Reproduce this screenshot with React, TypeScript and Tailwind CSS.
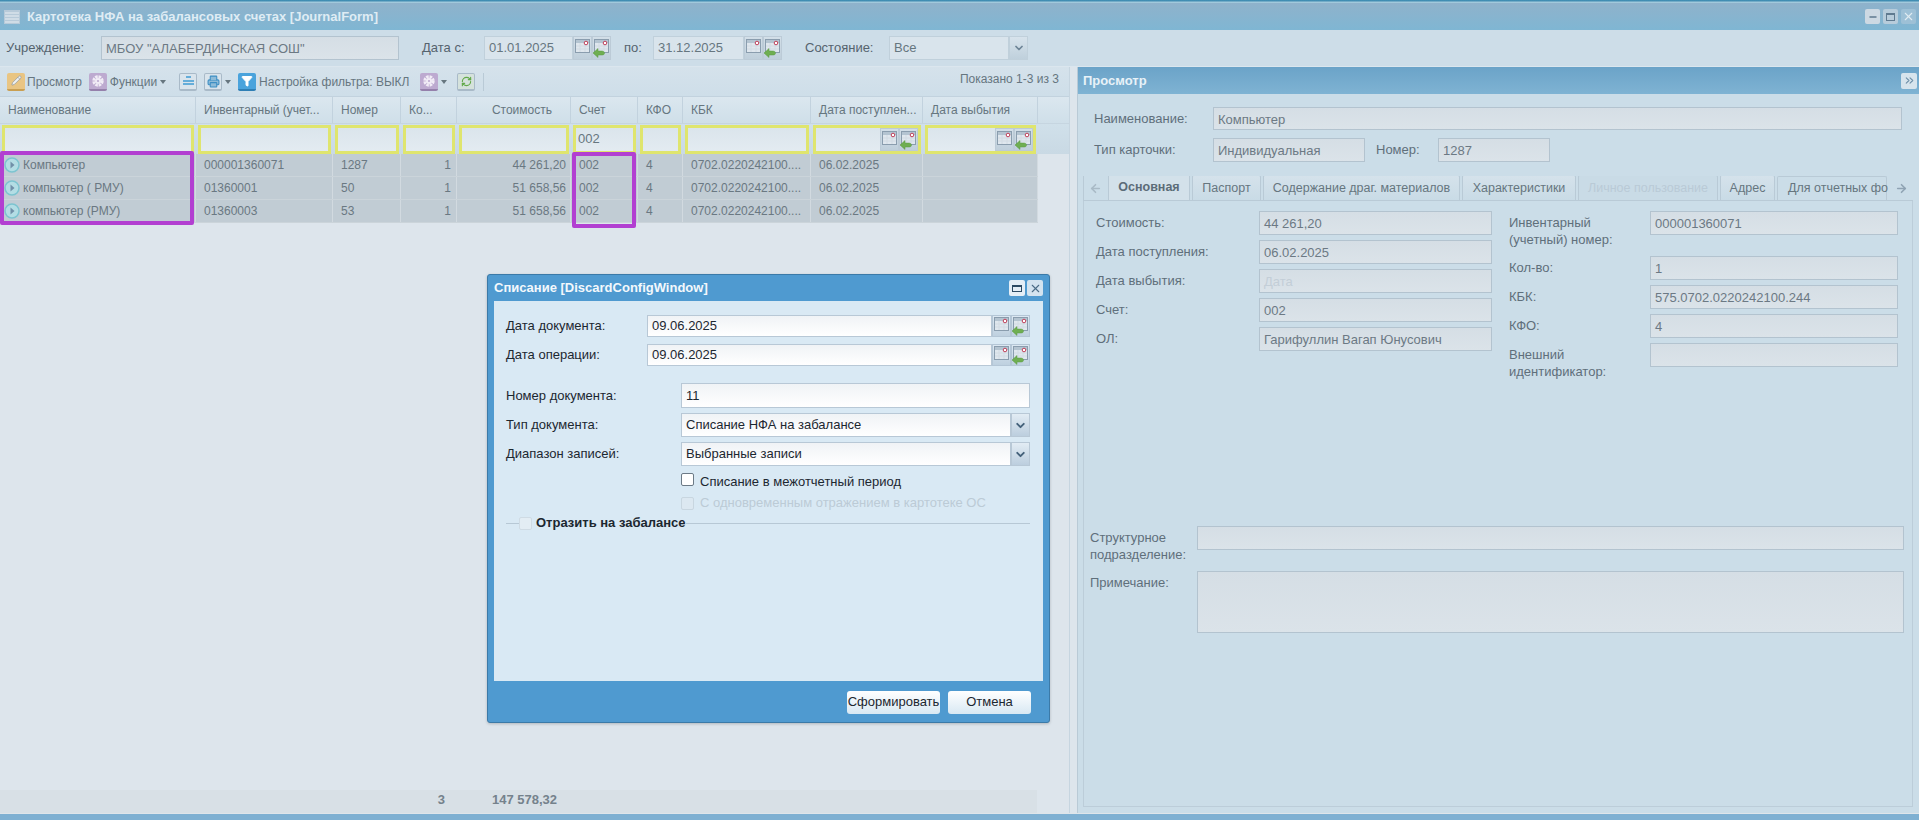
import { ArrowLeft, ArrowRight, ChevronDown, ChevronsRight, Funnel, Minus, Pencil, Printer, RefreshCw, X } from "lucide-react";
import React from "react";

type Col = { title: string; width: string; right?: boolean; date?: boolean; value?: string };

const columns: Array<Col> = [
    { title: "Наименование", width: "w-[196px]" },
    { title: "Инвентарный (учет...", width: "w-[137px]" },
    { title: "Номер", width: "w-[68px]" },
    { title: "Ко...", width: "w-[56px]" },
    { title: "Стоимость", width: "w-[114px]", right: true },
    { title: "Счет", width: "w-[67px]", value: "002" },
    { title: "КФО", width: "w-[45px]" },
    { title: "КБК", width: "w-[128px]" },
    { title: "Дата поступлен...", width: "w-[112px]", date: true },
    { title: "Дата выбытия", width: "w-[115px]", date: true },
];

const rows = [
    ["Компьютер", "000001360071", "1287", "1", "44 261,20", "002", "4", "0702.0220242100....", "06.02.2025", ""],
    ["компьютер ( РМУ)", "01360001", "50", "1", "51 658,56", "002", "4", "0702.0220242100....", "06.02.2025", ""],
    ["компьютер (РМУ)", "01360003", "53", "1", "51 658,56", "002", "4", "0702.0220242100....", "06.02.2025", ""],
];

function CalendarIcon({ arrow }: { arrow?: boolean }) {
    return (
        <svg width="17" height="20" viewBox="0 0 17 20">
            <rect x="1.5" y="1.5" width="14" height="13" fill="#dfe7ee" stroke="#8a9dae" />
            <rect x="2" y="2" width="13" height="3" fill="#b4c4d1" />
            <path d="M2 8h13M2 11h13M6 5v9M11 5v9" stroke="#d2dbe3" strokeWidth="1" />
            <circle cx="12" cy="5" r="1.8" fill="#fff" stroke="#c0405a" strokeWidth="1" />
            {arrow && <path d="M0 15l5-4.500V13h4c1.500 0 2.500 1 2.500 2.200S10.500 17 9 17H5v2.500z" fill="#6fae52" stroke="#5a9a42" strokeWidth="0.5" />}
        </svg>
    );
}

function DateButtons({ dialog }: { dialog?: boolean }) {
    const cls = dialog
        ? "flex items-center justify-center w-[19px] border border-[#b4c6d6] bg-gradient-to-b from-[#dce8f2] to-[#bed0df]"
        : "flex items-center justify-center w-[19px] border border-[#bccbd7] bg-gradient-to-b from-[#d3dfe8] to-[#bfcfdb]";
    return (
        <>
            <div className={cls}><CalendarIcon /></div>
            <div className={cls}><CalendarIcon arrow /></div>
        </>
    );
}

function Field({ width, height = "h-[24px]", text, dim }: { width: string; height?: string; text?: string; dim?: boolean }) {
    return (
        <div className={`${width} ${height} shrink-0 border border-[#b3c3cf] bg-gradient-to-b from-[#d5dee5] to-[#dbe3e9] pl-[4px] pt-[3px] text-[13px] leading-[17px] ${dim ? "text-[#c3ced7]" : "text-[#6c7984]"}`}>
            {text}
        </div>
    );
}

function DialogInput({ label, labelWidth, value, className, height, children }: { label: string; labelWidth: string; value: string; className: string; height: string; children?: React.ReactNode }) {
    return (
        <div className={`flex ${height} ${className}`}>
            <div className={`${labelWidth} flex items-center text-[13px] text-[#1c2730]`}>{label}</div>
            <div className="flex flex-1 min-w-0">
                <div className="flex flex-1 items-center border border-[#b8c8d6] bg-gradient-to-b from-[#f0f3f6] to-white pl-[4px] text-[13px] text-[#1c2730]">{value}</div>
                {children}
            </div>
        </div>
    );
}

function ComboArrow() {
    return (
        <div className="flex items-center justify-center w-[19px] border border-[#b8c8d6] bg-gradient-to-b from-[#e2ecf4] to-[#bccede]">
            <ChevronDown className="w-[13px] h-[13px] text-[#44617a]" strokeWidth={3.5} />
        </div>
    );
}

function Tile({ tone, children }: { tone: string; children: React.ReactNode }) {
    return <div className={`flex items-center justify-center w-[18px] h-[18px] shrink-0 rounded-[2px] border-b-2 ${tone}`}>{children}</div>;
}

function GearTile() {
    return (
        <Tile tone="bg-[#bdaad0] border-[#9580ab]">
            <svg width="12" height="12" viewBox="0 0 12 12">
                <circle cx="6" cy="6" r="4.200" fill="none" stroke="#f1ecf6" strokeWidth="3" strokeDasharray="2.500 0.800" />
                <circle cx="6" cy="6" r="3" fill="#f1ecf6" />
                <circle cx="6" cy="6" r="1.100" fill="#bdaad0" />
            </svg>
        </Tile>
    );
}

function Caret() {
    return <div className="ml-[3px] h-0 w-0 border-x-[3px] border-t-[4px] border-x-transparent border-t-[#66767f]" />;
}

function Toolbar() {
    return (
        <div className="flex items-center h-[30px] pl-[7px] text-[12px] text-[#66767f] border-b border-[#c2d2de] bg-gradient-to-b from-[#d5e2eb] to-[#cedee9]">
            <Tile tone="bg-[#e9c583] border-[#c99f52]"><Pencil className="w-[11px] h-[11px] text-[#8f97a0]" fill="#eef1f3" strokeWidth={1.5} /></Tile>
            <span className="ml-[2px]">Просмотр</span>
            <div className="ml-[7px]"><GearTile /></div>
            <span className="ml-[3px]">Функции</span>
            <Caret />
            <div className="ml-[13px]">
                <Tile tone="bg-[#d9e4ec] border-[#a9bac8] border">
                    <svg width="11" height="10" viewBox="0 0 11 10"><path d="M3 1h5M0 5h11M0 8h11" stroke="#3f9bd2" strokeWidth="1.6" /></svg>
                </Tile>
            </div>
            <div className="ml-[7px]">
                <Tile tone="bg-[#d9e4ec] border-[#a9bac8] border"><Printer className="w-[13px] h-[13px] text-[#3d8fc4]" fill="#8dbbd8" strokeWidth={2} /></Tile>
            </div>
            <Caret />
            <div className="ml-[7px]">
                <Tile tone="bg-[#4aa3dc] border-[#2f7fb5]"><Funnel className="w-[12px] h-[12px] text-white" fill="#fff" strokeWidth={2} /></Tile>
            </div>
            <span className="ml-[3px]">Настройка фильтра: ВЫКЛ</span>
            <div className="ml-[11px]"><GearTile /></div>
            <Caret />
            <div className="ml-[10px]">
                <Tile tone="bg-[#d5e2dc] border-[#a9bac8] border"><RefreshCw className="w-[11px] h-[11px] text-[#62a94a]" strokeWidth={2.5} /></Tile>
            </div>
            <div className="ml-[8px] w-px h-[18px] bg-[#b9cad6]" />
            <div className="ml-auto mr-[10px] mb-[6px]">Показано 1-3 из 3</div>
        </div>
    );
}

function RowIcon() {
    return (
        <svg width="16" height="16" viewBox="0 0 16 16" className="shrink-0">
            <circle cx="8" cy="8" r="7" fill="#b3dde4" stroke="#7cc4d0" strokeWidth="1.500" />
            <path d="M6.500 4.500l4 3.500-4 3.500z" fill="#7190a8" />
        </svg>
    );
}

function Grid() {
    return (
        <div className="relative flex-1 flex flex-col min-h-0">
            <div className="flex h-[27px] border-b border-[#c6d5e0] bg-gradient-to-b from-[#dbe7ef] to-[#cfdfe9] text-[12px] text-[#66767f]">
                {columns.map((c) => (
                    <div key={c.title} className={`${c.width} shrink-0 border-r border-[#c2d2de] leading-[26px] truncate ${c.right ? "text-right pr-[18px]" : "pl-[8px]"}`}>{c.title}</div>
                ))}
            </div>
            <div className="flex h-[30px] bg-gradient-to-b from-[#d0e0ea] to-[#c9d9e4]">
                {columns.map((c) => (
                    <div key={c.title} className={`${c.width} shrink-0 px-[2px] pt-px`}>
                        <div className="flex h-full border-[3px] border-[#dfe56e] bg-gradient-to-b from-[#dbe5ec] to-[#e3ebf1] text-[13px] leading-[22px] text-[#66767f]">
                            <div className="flex-1 pl-[2px]">{c.value}</div>
                            {c.date && <DateButtons />}
                        </div>
                    </div>
                ))}
            </div>
            <div className="w-[1038px]">
                {rows.map((row, i) => (
                    <div key={i} className="flex h-[23px] border-b border-[#cbd4da] bg-[#c1ccd4] text-[12px] leading-[22px] text-[#6a7882]">
                        {row.map((cell, j) => (
                            <div key={j} className={`${columns[j].width} shrink-0 border-r border-[#d2dae0] truncate ${j === 0 ? "flex items-center gap-[3px] pl-[4px]" : j === 3 ? "text-right pr-[5px]" : j === 4 ? "text-right pr-[4px]" : "pl-[8px]"}`}>
                                {j === 0 && <RowIcon />}
                                {cell}
                            </div>
                        ))}
                    </div>
                ))}
            </div>
            <div className="mt-auto flex w-[1037px] h-[23px] bg-[#d8e0e6] text-[13px] font-bold leading-[20px] text-[#75828c]">
                <div className="w-[445px] text-right">3</div>
                <div className="w-[112px] text-right">147 578,32</div>
            </div>
            <div className="absolute left-0 top-[54px] w-[194px] h-[74px] rounded-[2px] border-[4px] border-[#b23fd1]" />
            <div className="absolute left-[572px] top-[55px] w-[64px] h-[76px] rounded-[2px] border-[4px] border-[#b23fd1]" />
        </div>
    );
}

function Tab({ width, text, active, disabled }: { width: string; text: string; active?: boolean; disabled?: boolean }) {
    return (
        <div className={`${width} shrink-0 overflow-hidden whitespace-nowrap rounded-t-[2px] border border-b-0 border-[#b9cad6] text-center text-[12.5px] leading-[24px] ${active ? "h-[26px] bg-[#d3e1ea] font-bold text-[#5c6c78]" : disabled ? "bg-[#c9dbe6] text-[#b9cad6]" : "bg-gradient-to-b from-[#d5e2eb] to-[#c9dbe6] text-[#66767f]"}`}>
            {text}
        </div>
    );
}

function Row({ label, labelWidth, height = "h-[24px]", children }: { label: React.ReactNode; labelWidth: string; height?: string; children: React.ReactNode }) {
    return (
        <div className={`flex ${height}`}>
            <div className={`${labelWidth} shrink-0 pt-[3px] text-[13px] leading-[17px] text-[#5f6f7b]`}>{label}</div>
            {children}
        </div>
    );
}

function ViewPanel() {
    return (
        <div className="flex-1 flex flex-col min-w-0 border-l border-[#b9cad6] bg-[#cbdde8]">
            <div className="flex items-center h-[27px] pl-[5px] pr-[2px] bg-gradient-to-b from-[#6ba3c8] to-[#7fb3d3] text-[13px] font-bold text-[#e8f2f8]">
                Просмотр
                <div className="ml-auto flex items-center justify-center w-[16px] h-[16px] rounded-[2px] bg-[#d7e4ed]">
                    <ChevronsRight className="w-[13px] h-[13px] text-[#6d8fa8]" strokeWidth={2} />
                </div>
            </div>
            <div className="pl-[16px] pt-[13px]">
                <Row label="Наименование:" labelWidth="w-[119px]" height="h-[23px]"><Field width="w-[689px]" height="h-[23px]" text="Компьютер" /></Row>
                <div className="mt-[8px]">
                    <Row label="Тип карточки:" labelWidth="w-[119px]">
                        <Field width="w-[152px]" text="Индивидуальная" />
                        <div className="ml-[11px] w-[62px] pt-[3px] text-[13px] leading-[17px] text-[#5f6f7b]">Номер:</div>
                        <Field width="w-[112px]" text="1287" />
                    </Row>
                </div>
            </div>
            <div className="flex items-end gap-[2px] h-[25px] mt-[14px] ml-[5px] mr-[6px] border-b border-[#b9cad6] overflow-hidden">
                <div className="flex items-center justify-center w-[23px] h-full text-[#a9bac6] shrink-0 border-l border-[#b9cad6]"><ArrowLeft className="w-[13px] h-[13px]" strokeWidth={3} /></div>
                <Tab width="w-[82px]" text="Основная" active />
                <Tab width="w-[69px]" text="Паспорт" />
                <Tab width="w-[197px]" text="Содержание драг. материалов" />
                <Tab width="w-[114px]" text="Характеристики" />
                <Tab width="w-[140px]" text="Личное пользование" disabled />
                <Tab width="w-[55px]" text="Адрес" />
                <div className="flex items-center w-[110px] shrink-0 pl-[10px] h-full whitespace-nowrap border border-b-0 border-[#b9cad6] rounded-t-[2px] text-[12.5px] text-[#66767f]">Для отчетных фо</div>
                <div className="flex items-center justify-center flex-1 h-full text-[#8fa3b3]"><ArrowRight className="w-[13px] h-[13px]" strokeWidth={3} /></div>
            </div>
            <div className="flex-1 mb-[6px] ml-[5px] mr-[6px] flex flex-col border-x border-b border-[#bccdd9] pt-[10px] min-h-0">
                <div className="flex h-[315px] pl-[12px]">
                    <div className="flex flex-col gap-[5px]">
                        <Row label="Стоимость:" labelWidth="w-[163px]"><Field width="w-[233px]" text="44 261,20" /></Row>
                        <Row label="Дата поступления:" labelWidth="w-[163px]"><Field width="w-[233px]" text="06.02.2025" /></Row>
                        <Row label="Дата выбытия:" labelWidth="w-[163px]"><Field width="w-[233px]" text="Дата" dim /></Row>
                        <Row label="Счет:" labelWidth="w-[163px]"><Field width="w-[233px]" text="002" /></Row>
                        <Row label="ОЛ:" labelWidth="w-[163px]"><Field width="w-[233px]" text="Гарифуллин Вагап Юнусович" /></Row>
                    </div>
                    <div className="ml-[17px] flex flex-col gap-[5px]">
                        <Row label={<>Инвентарный<br />(учетный) номер:</>} labelWidth="w-[141px]" height="h-[40px]"><Field width="w-[248px]" text="000001360071" /></Row>
                        <Row label="Кол-во:" labelWidth="w-[141px]"><Field width="w-[248px]" text="1" /></Row>
                        <Row label="КБК:" labelWidth="w-[141px]"><Field width="w-[248px]" text="575.0702.0220242100.244" /></Row>
                        <Row label="КФО:" labelWidth="w-[141px]"><Field width="w-[248px]" text="4" /></Row>
                        <Row label={<>Внешний<br />идентификатор:</>} labelWidth="w-[141px]"><Field width="w-[248px]" /></Row>
                    </div>
                </div>
                <div className="pl-[6px]">
                    <Row label={<>Структурное<br />подразделение:</>} labelWidth="w-[107px]"><Field width="w-[707px]" /></Row>
                    <div className="mt-[21px]">
                        <Row label="Примечание:" labelWidth="w-[107px]" height="h-[62px]"><Field width="w-[707px]" height="h-[62px]" /></Row>
                    </div>
                </div>
            </div>
        </div>
    );
}

function DiscardDialog() {
    return (
        <div className="absolute left-[487px] top-[274px] flex flex-col w-[563px] h-[449px] rounded-[3px] border border-[#3b7aa8] bg-[#4f9ad0] shadow-[0_1px_3px_rgba(0,0,0,0.2)]">
            <div className="flex items-center h-[26px] pl-[6px] pr-[6px] text-[13px] font-bold text-[#f3f8fc]">
                Списание [DiscardConfigWindow]
                <div className="ml-auto flex gap-[2px]">
                    <div className="flex items-center justify-center w-[16px] h-[16px] rounded-[2px] bg-[#e4eef6]"><div className="w-[10px] h-[7px] border border-t-2 border-[#2c4a63]" /></div>
                    <div className="flex items-center justify-center w-[16px] h-[16px] rounded-[2px] bg-[#d3e3ef]"><X className="w-[13px] h-[13px] text-[#4a6b85]" strokeWidth={2} /></div>
                </div>
            </div>
            <div className="flex-1 mx-[6px] bg-[#d9e9f4] pt-[14px] pl-[12px] pr-[13px]">
                <DialogInput label="Дата документа:" labelWidth="w-[141px]" value="09.06.2025" className="" height="h-[22px]"><DateButtons dialog /></DialogInput>
                <DialogInput label="Дата операции:" labelWidth="w-[141px]" value="09.06.2025" className="mt-[7px]" height="h-[22px]"><DateButtons dialog /></DialogInput>
                <DialogInput label="Номер документа:" labelWidth="w-[175px]" value="11" className="mt-[17px]" height="h-[25px]" />
                <DialogInput label="Тип документа:" labelWidth="w-[175px]" value="Списание НФА на забалансе" className="mt-[5px]" height="h-[24px]"><ComboArrow /></DialogInput>
                <DialogInput label="Диапазон записей:" labelWidth="w-[175px]" value="Выбранные записи" className="mt-[5px]" height="h-[24px]"><ComboArrow /></DialogInput>
                <div className="mt-[7px] ml-[175px] flex items-start h-[14px] text-[13px] leading-[18px] text-[#1c2730]">
                    <div className="w-[13px] h-[13px] rounded-[2px] border border-[#6c7a86] bg-white" />
                    <span className="ml-[6px]">Списание в межотчетный период</span>
                </div>
                <div className="mt-[9px] ml-[175px] flex items-center h-[14px] text-[13px] text-[#bccbd6]">
                    <div className="w-[13px] h-[13px] rounded-[2px] border border-[#c8d6e0] bg-[#dce8f1]" />
                    <span className="ml-[6px]">С одновременным отражением в картотеке ОС</span>
                </div>
                <div className="mt-[6px] flex items-center h-[14px]">
                    <div className="w-[13px] h-px bg-[#b7c8d5]" />
                    <div className="w-[13px] h-[13px] rounded-[2px] border border-[#cfdbe4] bg-[#e3edf4]" />
                    <span className="ml-[4px] text-[13px] font-bold text-[#1c2730]">Отразить на забалансе</span>
                    <div className="flex-1 h-px bg-[#b7c8d5]" />
                </div>
            </div>
            <div className="flex justify-end gap-[8px] h-[41px] pt-[10px] pr-[18px]">
                <div className="w-[93px] h-[23px] rounded-[3px] bg-gradient-to-b from-white to-[#d8e8f3] text-center text-[13px] leading-[22px] text-[#1c2730]">Сформировать</div>
                <div className="w-[83px] h-[23px] rounded-[3px] bg-gradient-to-b from-white to-[#d8e8f3] text-center text-[13px] leading-[22px] text-[#1c2730]">Отмена</div>
            </div>
        </div>
    );
}

export default function App() {
    return (
        <div className="relative flex flex-col w-[1919px] h-[820px] overflow-hidden bg-[#dde5ec] font-['Liberation_Sans',Arial,sans-serif]">
            <div className="h-[3px] bg-gradient-to-b from-[#1f7fa8] to-[#b9d8e6]" />
            <div className="flex items-center h-[27px] pl-[4px] pr-[3px] bg-gradient-to-b from-[#8fb2cb] to-[#7fb6d3] text-[13px] font-bold text-[#dfecf4]">
                <svg width="16" height="14" viewBox="0 0 16 14" className="mr-[7px]">
                    <rect width="16" height="14" fill="#b7cad9" />
                    <path d="M1 3h14M1 6h14M1 9h14M1 12h14" stroke="#e8eef3" strokeWidth="1" />
                </svg>
                Картотека НФА на забалансовых счетах [JournalForm]
                <div className="ml-auto flex gap-[3px]">
                    <div className="flex items-center justify-center w-[15px] h-[15px] rounded-[2px] bg-[#cdd9e3]"><Minus className="w-[10px] h-[10px] text-[#5f7a90]" strokeWidth={4} /></div>
                    <div className="flex items-center justify-center w-[15px] h-[15px] rounded-[2px] bg-[#b7ccdb]"><div className="w-[9px] h-[8px] border border-t-2 border-[#5f7a90]" /></div>
                    <div className="flex items-center justify-center w-[15px] h-[15px] rounded-[2px] bg-[#9dc0d6]"><X className="w-[13px] h-[13px] text-[#e0ebf2]" strokeWidth={2} /></div>
                </div>
            </div>
            <div className="flex items-center h-[37px] shrink-0 pl-[6px] bg-[#cddde8] border-b border-[#dbe6ee] text-[13px] text-[#55636e]">
                <div className="w-[95px]">Учреждение:</div>
                <Field width="w-[298px]" text="МБОУ &quot;АЛАБЕРДИНСКАЯ СОШ&quot;" />
                <div className="ml-[23px] w-[62px]">Дата с:</div>
                <div className="flex w-[127px] h-[24px]">
                    <div className="flex-1 border border-[#c0d0db] bg-[#d9e4ec] pl-[4px] leading-[21px] text-[#66767f]">01.01.2025</div>
                    <DateButtons />
                </div>
                <div className="ml-[13px] w-[29px]">по:</div>
                <div className="flex w-[129px] h-[24px]">
                    <div className="flex-1 border border-[#c0d0db] bg-[#d9e4ec] pl-[4px] leading-[21px] text-[#66767f]">31.12.2025</div>
                    <DateButtons />
                </div>
                <div className="ml-[23px] w-[84px]">Состояние:</div>
                <div className="flex w-[139px] h-[24px]">
                    <div className="flex-1 border border-[#c0d0db] bg-[#d9e4ec] pl-[4px] leading-[21px] text-[#66767f]">Все</div>
                    <div className="flex items-center justify-center w-[19px] border border-[#c0d0db] bg-gradient-to-b from-[#d7e3ec] to-[#bfd0dc]"><ChevronDown className="w-[12px] h-[12px] text-[#6d8496]" strokeWidth={3.5} /></div>
                </div>
            </div>
            <div className="flex flex-1 min-h-0">
                <div className="flex flex-col w-[1070px] shrink-0 border-r border-[#c6d5e0]">
                    <Toolbar />
                    <Grid />
                </div>
                <div className="w-[7px] shrink-0" />
                <ViewPanel />
            </div>
            <div className="h-[7px] shrink-0 border-t border-[#dfe5ea] bg-[#7fb0d2]" />
            <DiscardDialog />
        </div>
    );
}
